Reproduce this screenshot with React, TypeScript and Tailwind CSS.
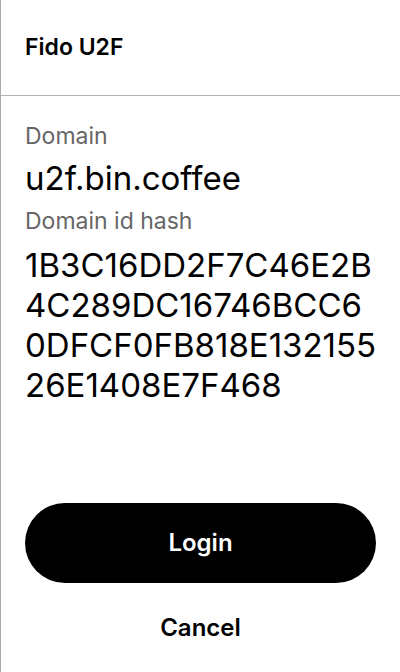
const hashLines = [
  "1B3C16DD2F7C46E2B",
  "4C289DC16746BCC6",
  "0DFCF0FB818E132155",
  "26E1408E7F468",
];

export default function App() {
  return (
    <div
      className="flex h-screen flex-col border-l border-[#aaaaaa] bg-white text-black"
      style={{ fontFamily: "Inter, 'Noto Sans', sans-serif" }}
    >
      {/* Header */}
      <header className="flex h-[96px] items-center border-b border-[#b3b3b3] px-6">
        <h1 className="text-[23px] font-semibold">Fido U2F</h1>
      </header>

      {/* Details */}
      <section className="flex-1 px-6 pt-[26px]">
        <p className="text-[23px] leading-[28px] text-[#666666]">Domain</p>
        <p className="mt-[8px] text-[33px] leading-[40px]">u2f.bin.coffee</p>
        <p className="mt-[9px] text-[23px] leading-[28px] text-[#666666]">Domain id hash</p>
        <p className="mt-[10px] text-[33px] leading-[40px]">
          {hashLines.map((line) => (
            <span key={line} className="block">
              {line}
            </span>
          ))}
        </p>
      </section>

      {/* Actions */}
      <div className="flex flex-col px-6">
        <button className="h-[80px] w-full rounded-full bg-black text-[24px] font-semibold text-white">
          Login
        </button>
        <button className="flex h-[89px] items-center justify-center text-[24px] font-semibold">
          Cancel
        </button>
      </div>
    </div>
  );
}
